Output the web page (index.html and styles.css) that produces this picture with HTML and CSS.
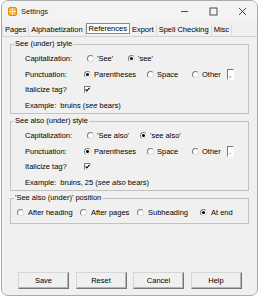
FILE: index.html
```html
<!DOCTYPE html>
<html lang="en">
<head>
    <meta charset="UTF-8">
    <meta name="viewport" content="width=device-width, initial-scale=1.0">
    <title>Settings</title>
    <link rel="stylesheet" href="styles.css">
</head>
<body>
    <div class="window">
        <div class="titlebar">
            <svg class="app-icon" width="9" height="9" viewBox="0 0 9 9">
                <rect x="0.5" y="0.5" width="8" height="8" rx="1.5" fill="#f7b84a" stroke="#e58a17"/>
                <path d="M4.5 1v7M1 4.5h7" stroke="#fde7b8" stroke-width="1"/>
            </svg>
            <span class="title">Settings</span>
            <div class="controls">
                <span class="ctl">
                    <svg width="9" height="9" viewBox="0 0 9 9"><path d="M1 4.5h7" stroke="#222" stroke-width="0.8"/></svg>
                </span>
                <span class="ctl">
                    <svg width="9" height="9" viewBox="0 0 9 9"><rect x="1" y="1" width="7" height="7" fill="none" stroke="#222" stroke-width="0.8"/></svg>
                </span>
                <span class="ctl">
                    <svg width="9" height="9" viewBox="0 0 9 9"><path d="M1 1l7 7M8 1l-7 7" stroke="#222" stroke-width="0.8"/></svg>
                </span>
            </div>
        </div>

        <div class="tabs">
            <span class="tab first">Pages</span>
            <span class="tab">Alphabetization</span>
            <span class="tab active">References</span>
            <span class="tab">Export</span>
            <span class="tab">Spell Checking</span>
            <span class="tab">Misc</span>
        </div>

        <div class="panel">
            <fieldset class="group">
                <legend>See (under) style</legend>
                <div class="rows">
                    <div class="row">
                        <span class="label">Capitalization:</span>
                        <span class="opt cap-first w41"><span class="radio"></span>'See'</span>
                        <span class="opt"><span class="radio on"></span>'see'</span>
                    </div>
                    <div class="row">
                        <span class="label">Punctuation:</span>
                        <span class="opt w63"><span class="radio on"></span>Parentheses</span>
                        <span class="opt w45"><span class="radio"></span>Space</span>
                        <span class="opt w35"><span class="radio"></span>Other</span>
                        <span class="entry">,</span>
                    </div>
                    <div class="row">
                        <span class="label">Italicize tag?</span>
                        <span class="check">
                            <svg width="5" height="5" viewBox="0 0 5 5"><path d="M0.5 2.4l1.4 1.5L4.5 0.8" fill="none" stroke="#000" stroke-width="1.1"/></svg>
                        </span>
                    </div>
                    <div class="row">
                        <span>Example:</span>
                        <span class="sample">bruins (<i>see</i> bears)</span>
                    </div>
                </div>
            </fieldset>

            <fieldset class="group">
                <legend>See also (under) style</legend>
                <div class="rows">
                    <div class="row">
                        <span class="label">Capitalization:</span>
                        <span class="opt cap-first w53"><span class="radio"></span>'See also'</span>
                        <span class="opt"><span class="radio on"></span>'see also'</span>
                    </div>
                    <div class="row">
                        <span class="label">Punctuation:</span>
                        <span class="opt w63"><span class="radio on"></span>Parentheses</span>
                        <span class="opt w45"><span class="radio"></span>Space</span>
                        <span class="opt w35"><span class="radio"></span>Other</span>
                        <span class="entry">.</span>
                    </div>
                    <div class="row">
                        <span class="label">Italicize tag?</span>
                        <span class="check">
                            <svg width="5" height="5" viewBox="0 0 5 5"><path d="M0.5 2.4l1.4 1.5L4.5 0.8" fill="none" stroke="#000" stroke-width="1.1"/></svg>
                        </span>
                    </div>
                    <div class="row">
                        <span>Example:</span>
                        <span class="sample">bruins, 25 (<i>see also</i> bears)</span>
                    </div>
                </div>
            </fieldset>

            <fieldset class="group">
                <legend>'See also (under)' position</legend>
                <div class="rows position">
                    <div class="row">
                        <span class="opt w63"><span class="radio"></span>After heading</span>
                        <span class="opt w57"><span class="radio"></span>After pages</span>
                        <span class="opt w63"><span class="radio"></span>Subheading</span>
                        <span class="opt"><span class="radio on"></span>At end</span>
                    </div>
                </div>
            </fieldset>
        </div>

        <div class="buttons">
            <button>Save</button>
            <button>Reset</button>
            <button>Cancel</button>
            <button>Help</button>
        </div>
    </div>
</body>
</html>
```

FILE: styles.css
```css
body {
    margin: 0;
    background-color: #fff;
    font-family: "Liberation Sans", Arial, sans-serif;
    font-size: 7.5px;
    color: #000;
}
.window {
    margin-left: 1px;
    width: 257px;
    height: 296px;
    box-sizing: border-box;
    border: 1px solid #ababab;
    border-radius: 7px;
    background-color: #f0f0f0;
    overflow: hidden;
    display: flex;
    flex-direction: column;
}

/* title bar */
.titlebar {
    height: 21px;
    display: flex;
    align-items: center;
    background-color: #f3f3f3;
    padding-left: 6px;
}
.app-icon {
    display: block;
}
.title {
    margin-left: 4px;
    color: #1a1a1a;
}
.controls {
    margin-left: auto;
    display: flex;
}
.ctl {
    width: 29px;
    height: 21px;
    display: flex;
    align-items: center;
    justify-content: center;
}
.ctl svg {
    display: block;
}

/* notebook tabs */
.tabs {
    height: 14px;
    display: flex;
    align-items: flex-end;
}
.tab {
    line-height: 10px;
    padding: 0 2px 1px;
    border-right: 1px solid #dadada;
    white-space: nowrap;
}
.tab.first {
    border-left: 1px solid #dadada;
}
.tab.active {
    line-height: 9px;
    padding: 0 2px;
    border: 1px solid #8c8c8c;
    background-color: #fbfbfb;
    margin-bottom: 2px;
}
.panel {
    flex: 1;
    border-top: 1px solid #d4d4d4;
    padding: 2px 8px 0 8px;
}

/* group boxes */
.group {
    margin: 0;
    padding: 0;
    min-width: 0;
    border: 1px solid #c2c2c2;
}
.group + .group {
    margin-top: 2px;
}
.group legend {
    margin-left: 3px;
    padding: 0 1px;
    line-height: 10px;
}
.rows {
    padding: 2px 0 0 14px;
}
.rows.position {
    padding: 2px 0 2px 6px;
}
.row {
    height: 15.5px;
    display: flex;
    align-items: center;
    white-space: nowrap;
}
.label {
    width: 59px;
}
.opt {
    display: flex;
    align-items: center;
}
.cap-first {
    margin-left: 3px;
}
.w35 { width: 35px; }
.w41 { width: 41px; }
.w45 { width: 45px; }
.w53 { width: 53px; }
.w57 { width: 57px; }
.w63 { width: 63px; }

.radio {
    width: 7px;
    height: 7px;
    box-sizing: border-box;
    border-radius: 50%;
    border: 1px solid;
    border-color: #7a7a7a #dcdcdc #dcdcdc #7a7a7a;
    background-color: #fff;
    margin-right: 3px;
    display: flex;
    align-items: center;
    justify-content: center;
}
.position .radio {
    margin-right: 4px;
}
.radio.on::after {
    content: "";
    width: 3px;
    height: 3px;
    border-radius: 50%;
    background-color: #000;
}
.check {
    width: 7px;
    height: 7px;
    box-sizing: border-box;
    border: 1px solid;
    border-color: #7a7a7a #e4e4e4 #e4e4e4 #7a7a7a;
    background-color: #fff;
    display: flex;
    align-items: center;
    justify-content: center;
}
.check svg {
    display: block;
}
.entry {
    width: 7px;
    height: 11px;
    box-sizing: border-box;
    border: 1px solid;
    border-color: #7a7a7a #fff #fff #7a7a7a;
    background-color: #fff;
    line-height: 9px;
    padding-left: 1px;
}
.sample {
    margin-left: 4px;
}

/* bottom buttons */
.buttons {
    display: flex;
    gap: 6.5px;
    padding: 0 0 6px 16px;
}
.buttons button {
    width: 51px;
    height: 17px;
    padding: 0;
    font-family: inherit;
    font-size: 7.5px;
    color: #000;
    background-color: #f0f0f0;
    border: 1px solid;
    border-color: #d6d6d6 #767676 #767676 #d6d6d6;
    box-shadow: inset -1px -1px 0 #b4b4b4;
}
```
